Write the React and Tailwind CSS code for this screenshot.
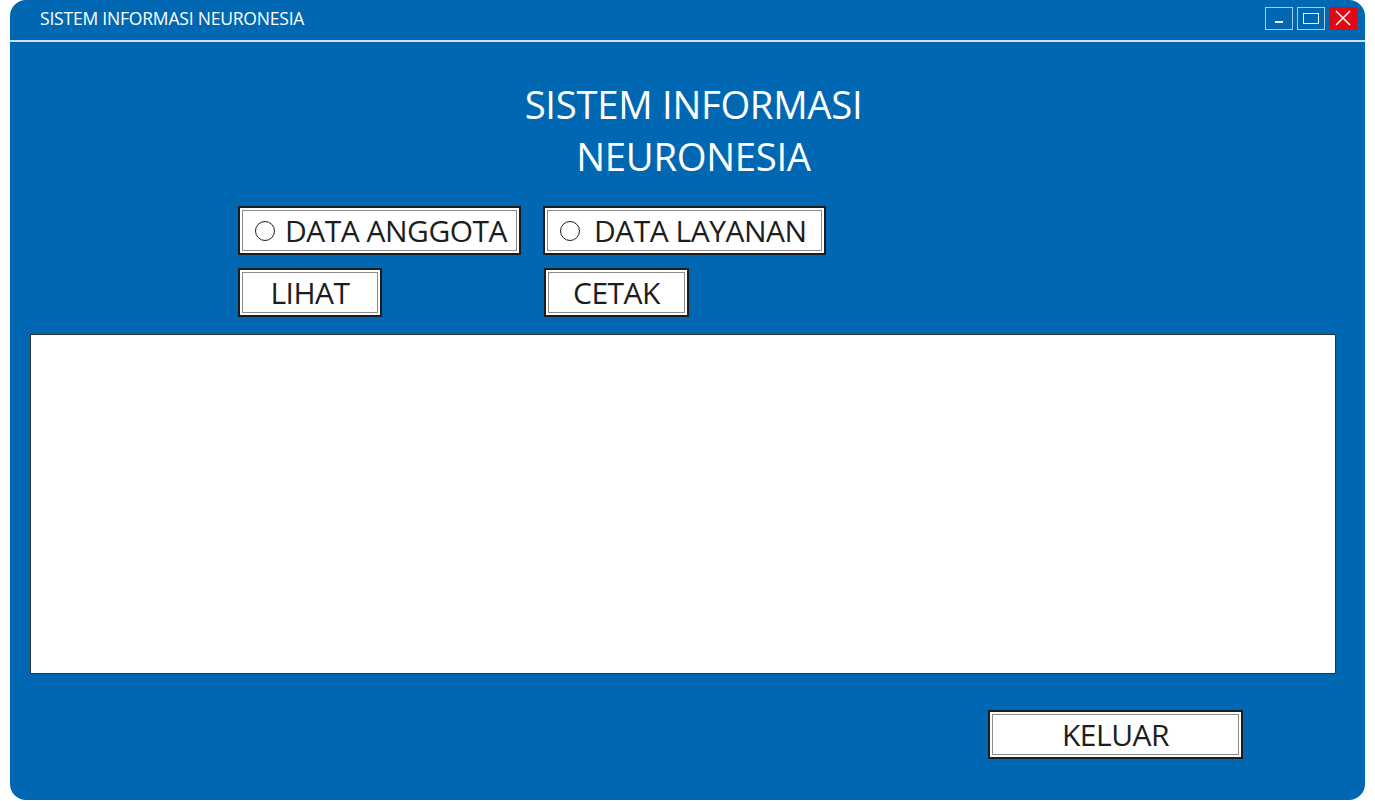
import React from "react";

const font = { fontFamily: '"Open Sans", "Noto Sans", sans-serif' };

const Framed = ({ className = "", children }) => (
    <div className={`border-2 border-[#1d1d1b] bg-white p-[2px] ${className}`}>
        <div className="h-full w-full border border-[#8c8c8c] flex items-center">
            {children}
        </div>
    </div>
);

const Radio = ({ label, gap }) => (
    <Framed className="w-[283px] h-[49px]">
        <div className={`flex items-center pl-[12px] ${gap}`}>
            <span className="w-[20px] h-[20px] rounded-full border-[1.5px] border-[#1d1d1b]" />
            <span className="text-[30px] leading-none text-[#1d1d1b] tracking-[-0.5px]">{label}</span>
        </div>
    </Framed>
);

const Button = ({ label, width }) => (
    <Framed className={`${width} h-[49px]`}>
        <span className="w-full text-center text-[30px] leading-none text-[#1d1d1b] tracking-[-0.5px]">{label}</span>
    </Framed>
);

const App = () => {
    return (
        <div className="w-full h-[801px] bg-white overflow-hidden" style={font}>
            <div className="ml-[10px] w-[1355px] h-[800px] rounded-[16px] bg-[#0068b3] flex flex-col">
                {/* title bar */}
                <div className="h-[40px] flex items-center justify-between pl-[30px] pr-[8px]">
                    <span className="text-white text-[17.5px] tracking-[-0.2px] -mt-[4px]">SISTEM INFORMASI NEURONESIA</span>
                    <div className="flex gap-[4px] -mt-[4px]">
                        <div className="w-[28px] h-[23px] border border-[#a9c9e6] flex items-end justify-center pb-[6px]">
                            <span className="w-[8px] h-[1.5px] bg-white" />
                        </div>
                        <div className="w-[28px] h-[23px] border border-[#a9c9e6] flex items-center justify-center">
                            <span className="w-[16px] h-[11px] border-[1.5px] border-white" />
                        </div>
                        <div className="w-[28px] h-[23px] bg-[#e30613] flex items-center justify-center">
                            <svg width="18" height="18" viewBox="0 0 18 18">
                                <path d="M2 2 L16 16 M16 2 L2 16" stroke="white" strokeWidth="1.5" />
                            </svg>
                        </div>
                    </div>
                </div>
                <div className="h-[2px] bg-[#cfe1f1]" />

                {/* heading */}
                <h1 className="mt-[36px] pl-[12px] text-center text-white text-[38.3px] leading-[52px] tracking-[-0.3px]">
                    SISTEM INFORMASI
                    <br />
                    NEURONESIA
                </h1>

                {/* options */}
                <div className="mt-[24px] pl-[228px] flex flex-col gap-[13px]">
                    <div className="flex gap-[22px]">
                        <Radio label="DATA ANGGOTA" gap="gap-[10px]" />
                        <Radio label="DATA LAYANAN" gap="gap-[14px]" />
                    </div>
                    <div className="flex gap-[162px]">
                        <Button label="LIHAT" width="w-[144px]" />
                        <Button label="CETAK" width="w-[145px]" />
                    </div>
                </div>

                {/* data panel */}
                <div className="mt-[17px] ml-[20px] w-[1306px] h-[340px] bg-white border border-[#2b3440]" />

                {/* footer */}
                <div className="mt-[36px] pl-[978px]">
                    <Button label="KELUAR" width="w-[255px]" />
                </div>
            </div>
        </div>
    );
};

export default App;
